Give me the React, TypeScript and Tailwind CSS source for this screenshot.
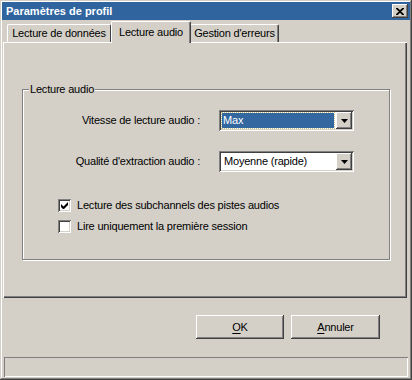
import React from "react";

const raised =
  "shadow-[inset_-1px_-1px_#404040,inset_1px_1px_#ffffff,inset_-2px_-2px_#808080,inset_2px_2px_#d4d0c8]";
const sunken =
  "shadow-[inset_1px_1px_#808080,inset_-1px_-1px_#ffffff,inset_2px_2px_#404040,inset_-2px_-2px_#d4d0c8]";

function Arrow() {
  return (
    <div className={`w-[16px] h-[17px] bg-[#d4d0c8] flex items-center justify-center ${raised}`}>
      <svg width="7" height="4" viewBox="0 0 7 4">
        <path d="M0 0h7L3.5 4z" fill="#000" />
      </svg>
    </div>
  );
}

function Combo({ value, selected }: { value: string; selected?: boolean }) {
  return (
    <div className={`w-[135px] h-[21px] bg-white flex items-center p-[2px] ${sunken}`}>
      <div className="flex-1 h-full flex items-center pl-[1px] pr-[2px]">
        {selected ? (
          <div className="w-full h-[15px] bg-[#33679f] text-white flex items-center pl-[1px] outline outline-1 outline-dotted outline-[#c8c080]">
            {value}
          </div>
        ) : (
          <div className="w-full h-[15px] text-black flex items-center pl-[2px]">{value}</div>
        )}
      </div>
      <Arrow />
    </div>
  );
}

function Check({ checked, label }: { checked?: boolean; label: string }) {
  return (
    <div className="flex items-center h-[13px]">
      <div className={`w-[13px] h-[13px] bg-white flex items-center justify-center ${sunken}`}>
        {checked && (
          <svg width="7" height="7" viewBox="0 0 7 7">
            <path d="M0 2v3l2 2h1l4-4V0L2.5 4.5z" fill="#000" />
          </svg>
        )}
      </div>
      <span className="ml-[6px] text-black">{label}</span>
    </div>
  );
}

function Button({ label, u }: { label: string; u: string }) {
  return (
    <div className={`h-[24px] flex items-center justify-center bg-[#d4d0c8] text-black ${raised}`}>
      <span>
        <span className="underline underline-offset-2">{u}</span>
        {label}
      </span>
    </div>
  );
}

export default function App() {
  return (
    <div
      className={`w-[412px] h-[380px] bg-[#d4d0c8] p-[2px] flex flex-col text-[11px] leading-none tracking-[-0.2px] font-['Liberation_Sans',Arial,sans-serif] text-black shadow-[inset_-1px_-1px_#404040,inset_1px_1px_#d4d0c8,inset_-2px_-2px_#808080,inset_2px_2px_#ffffff]`}
    >
      {/* Title bar */}
      <div className="h-[18px] bg-[#30649f] flex items-center justify-between pl-[4px] pr-[2px] shrink-0">
        <span className="text-white font-bold text-[11px] tracking-normal">Paramètres de profil</span>
        <div className={`w-[16px] h-[14px] bg-[#d4d0c8] flex items-center justify-center ${raised}`}>
          <svg width="8" height="7" viewBox="0 0 8 7">
            <path d="M0 0L7 7M1 0L8 7M7 0L0 7M8 0L1 7" stroke="#000" strokeWidth="1.1" />
          </svg>
        </div>
      </div>

      {/* Tabs */}
      <div className="h-[20px] mt-[2px] flex items-end pl-[5px] shrink-0">
        <div className="w-[104px] h-[18px] flex items-center justify-center border-t border-l border-white border-r border-r-[#404040] rounded-tl-[2px] rounded-tr-[2px]">
          Lecture de données
        </div>
        <div className="relative z-10 w-[80px] h-[22px] -mb-[1px] bg-[#d4d0c8] flex items-start pt-[5px] justify-center border-t border-l border-white border-r border-r-[#404040] rounded-tl-[2px] rounded-tr-[2px] shadow-[inset_-1px_0_#808080]">
          Lecture audio
        </div>
        <div className="w-[88px] h-[18px] flex items-center justify-center border-t border-white border-r border-r-[#404040] rounded-tr-[2px] shadow-[inset_-1px_0_#808080]">
          Gestion d'erreurs
        </div>
      </div>

      {/* Tab panel */}
      <div className="ml-[1px] w-[404px] h-[256px] shrink-0 border-t border-l border-white shadow-[inset_-1px_-1px_#404040,inset_-2px_-2px_#808080] pt-[46px] pl-[18px]">
        <div className="relative w-[368px] h-[171px] border border-[#808080] shadow-[inset_1px_1px_#ffffff,1px_1px_#ffffff]">
          <span className="absolute left-[6px] -top-[6px] bg-[#d4d0c8] px-[1px]">Lecture audio</span>
          <div className="pt-[20px] flex flex-col">
            <div className="flex items-center">
              <div className="w-[177px] text-right">Vitesse de lecture audio :</div>
              <div className="ml-[19px]">
                <Combo value="Max" selected />
              </div>
            </div>
            <div className="flex items-center mt-[20px]">
              <div className="w-[177px] text-right">Qualité d'extraction audio :</div>
              <div className="ml-[19px]">
                <Combo value="Moyenne (rapide)" />
              </div>
            </div>
            <div className="mt-[27px] ml-[35px] flex flex-col gap-[8px]">
              <Check checked label="Lecture des subchannels des pistes audios" />
              <Check label="Lire uniquement la première session" />
            </div>
          </div>
        </div>
      </div>

      {/* Buttons */}
      <div className="mt-[17px] flex justify-end gap-[7px] pr-[30px] shrink-0">
        <div className="w-[88px]">
          <Button u="O" label="K" />
        </div>
        <div className="w-[89px]">
          <Button u="A" label="nnuler" />
        </div>
      </div>

      {/* Status bar */}
      <div className="mt-[18px] mx-[2px] h-[20px] shrink-0 shadow-[inset_1px_1px_#808080,inset_-1px_-1px_#ffffff]" />
    </div>
  );
}
